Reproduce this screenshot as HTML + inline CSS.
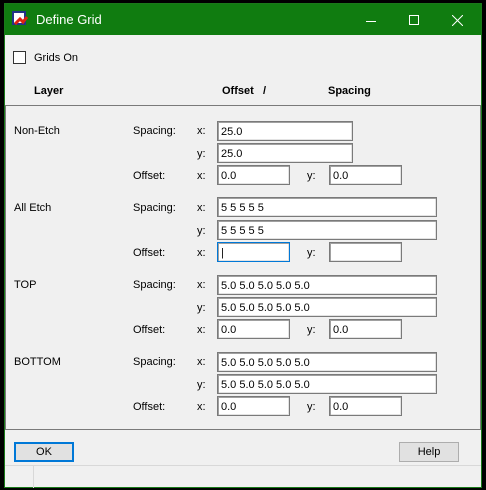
<!DOCTYPE html>
<html><head><style>
*{margin:0;padding:0;box-sizing:border-box}
body{width:486px;height:490px;background:#000;position:relative;overflow:hidden;font-family:"Liberation Sans",sans-serif;font-size:11px;color:#000}
.win{position:absolute;left:4px;top:3px;width:478px;height:485px;background:#f0f0f0;border:1px solid #1a7a1a}
.title{position:absolute;left:0;top:0;width:476px;height:31px;background:#107c10;color:#fff;font-size:13px}
.a{position:absolute;white-space:nowrap}
.in{position:absolute;background:#fff;border:1px solid #7a7a7a;box-shadow:inset 1px 1px 0 #a0a0a0,inset -1px -1px 0 #e3e3e3;padding:4px 0 0 3px;font-size:11px;line-height:12px;height:20px}
.btn{position:absolute;background:#e1e1e1;border:1px solid #adadad;text-align:center;line-height:18px;height:20px;width:60px}
b{font-weight:bold}
</style></head><body>
<div class="win">
<div class="title">
<svg class="a" style="left:7px;top:7px" width="16" height="16"><rect x="1" y="1" width="12" height="12" fill="#fff" stroke="#223388" stroke-width="2"/><path d="M3 13 L8 8 L11 11 L15 6" stroke="#d21" stroke-width="3" fill="none"/></svg>
<span class="a" style="left:31px;top:8px">Define Grid</span>
<div class="a" style="left:361px;top:17px;width:10px;height:1px;background:#fff"></div>
<div class="a" style="left:404px;top:11px;width:10px;height:10px;border:1px solid #fff"></div>
<svg class="a" style="left:447px;top:11px" width="11" height="11"><path d="M0 0L11 11M11 0L0 11" stroke="#fff" stroke-width="1"/></svg>
</div>
<div class="a" style="left:8px;top:47px;width:13px;height:13px;background:#fff;border:1px solid #333"></div>
<span class="a" style="left:29px;top:48px">Grids On</span>
<b class="a" style="left:29px;top:81px">Layer</b>
<b class="a" style="left:217px;top:81px">Offset &nbsp; /</b>
<b class="a" style="left:323px;top:81px">Spacing</b>
<div class="a" style="left:0px;top:101px;width:476px;height:325px;border:1px solid #7a7a7a"></div>

<span class="a" style="left:9px;top:121px">Non-Etch</span>
<span class="a" style="left:128px;top:121px">Spacing:</span><span class="a" style="left:192px;top:121px">x:</span>
<div class="in" style="left:212px;top:117px;width:136px">25.0</div>
<span class="a" style="left:192px;top:144px">y:</span>
<div class="in" style="left:212px;top:139px;width:136px">25.0</div>
<span class="a" style="left:128px;top:166px">Offset:</span><span class="a" style="left:192px;top:166px">x:</span>
<div class="in" style="left:212px;top:161px;width:73px">0.0</div>
<span class="a" style="left:302px;top:166px">y:</span>
<div class="in" style="left:324px;top:161px;width:73px">0.0</div>

<span class="a" style="left:9px;top:198px">All Etch</span>
<span class="a" style="left:128px;top:198px">Spacing:</span><span class="a" style="left:192px;top:198px">x:</span>
<div class="in" style="left:212px;top:193px;width:220px">5 5 5 5 5</div>
<span class="a" style="left:192px;top:221px">y:</span>
<div class="in" style="left:212px;top:216px;width:220px">5 5 5 5 5</div>
<span class="a" style="left:128px;top:243px">Offset:</span><span class="a" style="left:192px;top:243px">x:</span>
<div class="in" style="left:212px;top:238px;width:73px;border-color:#0078d7">|</div>
<span class="a" style="left:302px;top:243px">y:</span>
<div class="in" style="left:324px;top:238px;width:73px"></div>

<span class="a" style="left:9px;top:275px">TOP</span>
<span class="a" style="left:128px;top:275px">Spacing:</span><span class="a" style="left:192px;top:275px">x:</span>
<div class="in" style="left:212px;top:271px;width:220px">5.0 5.0 5.0 5.0 5.0</div>
<span class="a" style="left:192px;top:298px">y:</span>
<div class="in" style="left:212px;top:293px;width:220px">5.0 5.0 5.0 5.0 5.0</div>
<span class="a" style="left:128px;top:320px">Offset:</span><span class="a" style="left:192px;top:320px">x:</span>
<div class="in" style="left:212px;top:315px;width:73px">0.0</div>
<span class="a" style="left:302px;top:320px">y:</span>
<div class="in" style="left:324px;top:315px;width:73px">0.0</div>

<span class="a" style="left:9px;top:352px">BOTTOM</span>
<span class="a" style="left:128px;top:352px">Spacing:</span><span class="a" style="left:192px;top:352px">x:</span>
<div class="in" style="left:212px;top:348px;width:220px">5.0 5.0 5.0 5.0 5.0</div>
<span class="a" style="left:192px;top:375px">y:</span>
<div class="in" style="left:212px;top:370px;width:220px">5.0 5.0 5.0 5.0 5.0</div>
<span class="a" style="left:128px;top:397px">Offset:</span><span class="a" style="left:192px;top:397px">x:</span>
<div class="in" style="left:212px;top:392px;width:73px">0.0</div>
<span class="a" style="left:302px;top:397px">y:</span>
<div class="in" style="left:324px;top:392px;width:73px">0.0</div>

<div class="btn" style="left:9px;top:438px;border:2px solid #0078d7;line-height:16px">OK</div>
<div class="btn" style="left:394px;top:438px">Help</div>
<div class="a" style="left:0;top:461px;width:476px;height:1px;background:#d8d8d8"></div>
<div class="a" style="left:28px;top:462px;width:1px;height:22px;background:#d8d8d8"></div>
</div>
</body></html>
